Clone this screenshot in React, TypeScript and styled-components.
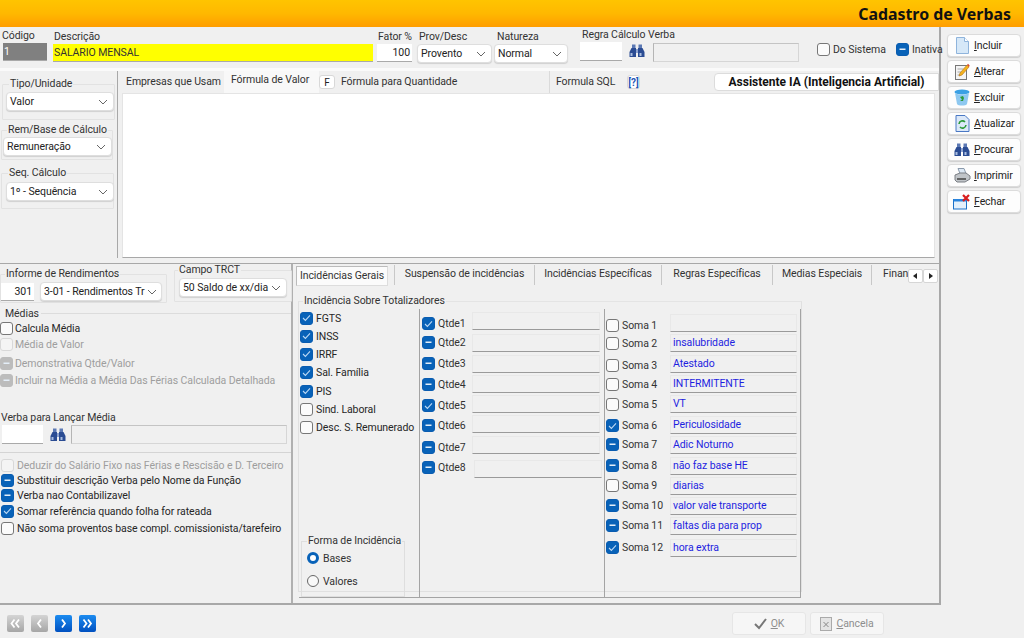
import React from 'react';
import styled, { createGlobalStyle } from 'styled-components';

const UI_FONT = '"Roboto", "Liberation Sans", sans-serif';
const FS = '10.5px';

const Global = createGlobalStyle`
  html, body { margin: 0; padding: 0; background: #f0f0f0; }
  * { box-sizing: border-box; }
  body { font-family: ${UI_FONT}; font-size: ${FS}; letter-spacing: -0.08px; color: #333; }
`;

const Page = styled.div`
  width: 1024px; height: 638px; display: flex; flex-direction: column; overflow: hidden; background: #f0f0f0;
`;
const Header = styled.header`
  height: 27px; flex: none; display: flex; align-items: center; justify-content: flex-end; padding: 0 13px 0 0;
  background: linear-gradient(180deg, #ffc400 0%, #ffb800 50%, #ff9d00 100%);
`;
const Title = styled.h1`
  margin: 0; font-family: "Noto Sans", sans-serif; font-weight: 700; font-size: 15.9px; letter-spacing: 0; color: #111;
`;
const Body = styled.div`
  flex: none; height: 578px; display: flex;
`;
const MainCol = styled.main`
  width: 941px; flex: none; display: flex; flex-direction: column; border-right: 2px solid #a8a8a8;
`;
const Side = styled.aside`
  flex: 1; display: flex; flex-direction: column; gap: 3px; padding: 7px 3px 0 6px;
`;
const SideButton = styled.div`
  height: 23px; display: flex; align-items: center; gap: 3px; padding-left: 5px; background: #fdfdfd;
  border: 1px solid #dcdcdc; border-radius: 4px; color: #222; font-size: ${FS}; box-shadow: 0 1px 1px #cfcfcf;
  u { text-underline-offset: 1px; }
`;
const IconSlot = styled.span`
  width: 18px; height: 18px; flex: none; display: flex; align-items: center; justify-content: center;
`;
const TopRow = styled.section`
  height: 41px; flex: none; display: flex; align-items: flex-start;
`;
const Field = styled.div<{ $w: number; $ml?: number; $pt?: number }>`
  width: ${p => p.$w}px; margin-left: ${p => p.$ml ?? 0}px; padding-top: ${p => p.$pt ?? 2}px; flex: none;
  display: flex; flex-direction: column;
`;
const Label = styled.span<{ $ml?: number; $mt?: number }>`
  height: 14px; line-height: 14px; margin-left: ${p => p.$ml ?? 0}px; margin-top: ${p => p.$mt ?? 0}px; flex: none;
  white-space: nowrap; color: #333; font-size: ${FS};
`;
const Input = styled.div<{ $bg?: string; $fg?: string; $align?: string; $h?: number; $w?: number }>`
  width: ${p => (p.$w ? `${p.$w}px` : 'auto')}; flex: none;
  height: ${p => p.$h ?? 18}px; line-height: 18px; padding: 0 2px 0 1px; background: ${p => p.$bg ?? '#fff'}; color: ${p => p.$fg ?? '#222'};
  text-align: ${p => p.$align ?? 'left'}; border-bottom: 1px solid #a9a9a9; white-space: nowrap; overflow: hidden; font-size: ${FS};
`;
const ReadOnly = styled.div<{ $w: number; $h?: number; $ml?: number }>`
  width: ${p => p.$w}px; height: ${p => p.$h ?? 19}px; margin-left: ${p => p.$ml ?? 0}px; flex: none; background: #f0f0f0;
  border: 1px solid #d6d6d6; border-left-color: #b5b5b5; border-top-color: #c4c4c4;
`;
const SelectBox = styled.div<{ $w?: number; $ml?: number }>`
  width: ${p => (p.$w ? `${p.$w}px` : 'auto')}; margin-left: ${p => p.$ml ?? 0}px; height: 19px; flex: none; display: flex; align-items: center;
  justify-content: space-between; padding: 0 5px 0 3px; background: #fff; border: 1px solid #dedede; border-radius: 4px;
  color: #222; white-space: nowrap; overflow: hidden; font-size: ${FS}; box-shadow: 0 1px 1px #d0d0d0;
  svg { flex: none; margin-left: 2px; }
`;
const InlineRow = styled.div<{ $ml?: number; $pt?: number; $gap?: number; $w?: number }>`
  display: flex; align-items: center; margin-left: ${p => p.$ml ?? 0}px; padding-top: ${p => p.$pt ?? 0}px; gap: ${p => p.$gap ?? 0}px; flex: none;
  width: ${p => (p.$w ? `${p.$w}px` : 'auto')}; white-space: nowrap;
`;
const Middle = styled.section`
  height: 195px; flex: none; display: flex; border-top: 3px solid #fafafa;
`;
const LeftPanel = styled.div`
  width: 118px; flex: none; height: 187px; border-right: 1px solid #a8a8a8; display: flex; flex-direction: column;
`;
const Group = styled.fieldset<{ $w: number; $h: number; $ml?: number; $mt?: number; $lx?: number; $pt?: number }>`
  margin: ${p => p.$mt ?? 0}px 0 0 ${p => p.$ml ?? 0}px; padding: ${p => p.$pt ?? 0}px 0 0 0; width: ${p => p.$w}px; height: ${p => p.$h}px; flex: none;
  border: 1px solid #e2e2e2; border-radius: 1px; min-width: 0;
  legend { margin-left: ${p => p.$lx ?? 5}px; padding: 0 1px; font-size: ${FS}; line-height: 12px; color: #333; white-space: nowrap; }
`;
const EditorCol = styled.div`
  flex: 1; display: flex; flex-direction: column; min-width: 0;
`;
const TopTabs = styled.nav`
  height: 22px; flex: none; display: flex; align-items: center;
`;
const TabText = styled.span<{ $w?: number; $ml?: number; $active?: boolean; $sep?: boolean }>`
  width: ${p => (p.$w ? `${p.$w}px` : 'auto')}; margin-left: ${p => p.$ml ?? 0}px; flex: none; white-space: nowrap; color: #333;
  height: 22px; line-height: 21px; font-size: ${FS};
  ${p => p.$active ? 'background:#f8f8f8; line-height:17px; padding-left:7px;' : ''}
  ${p => p.$sep ? 'border-right:1px solid #dadada;' : ''}
`;
const MiniButton = styled.span<{ $blue?: boolean; $ml?: number; $w?: number }>`
  width: ${p => p.$w ?? 15}px; height: 14px; flex: none; margin-left: ${p => p.$ml ?? 0}px; display: flex; align-items: center; justify-content: center;
  background: #fff; border: 1px solid #d8d8d8; border-radius: 3px; font-size: 10px; font-weight: ${p => p.$blue ? 700 : 400};
  color: ${p => p.$blue ? '#2456b8' : '#222'};
`;
const Assist = styled.div`
  width: 225px; height: 18px; flex: none; margin-left: 74px; display: flex; align-items: center; justify-content: center;
  background: #fff; border: 1px solid #dcdcdc; border-radius: 4px 0 0 4px; font-weight: 700; font-size: 12px; letter-spacing: 0; color: #111;
`;
const Editor = styled.div`
  width: 813px; height: 165px; flex: none; margin-left: 4px; background: #fff; border: 1px solid #e4e4e4; border-bottom: 1px solid #a8a8a8;
`;
const Lower = styled.section`
  flex: 1; display: flex; min-height: 0; border-top: 1px solid #a8a8a8; border-bottom: 2px solid #a8a8a8;
`;
const LowerLeft = styled.div`
  width: 293px; flex: none; display: flex; flex-direction: column; border-right: 2px solid #b0b0b0;
`;
const InfoRow = styled.div`
  height: 43px; flex: none; display: flex; align-items: flex-start;
`;
const SectionTitle = styled.div`
  height: 13px; flex: none; padding-left: 5px; line-height: 13px; font-size: ${FS}; color: #333;
  display: flex; align-items: center; gap: 1px;
  &::after { content: ""; flex: 1; height: 1px; background: #dcdcdc; margin-left: 1px; }
`;
const CheckRow = styled.div<{ $h: number; $ml?: number; $mt?: number; $tx?: number; $dim?: boolean }>`
  height: ${p => p.$h}px; flex: none; display: flex; align-items: center; margin: ${p => p.$mt ?? 0}px 0 0 ${p => p.$ml ?? 0}px; gap: ${p => p.$tx ?? 3}px;
  color: ${p => p.$dim ? '#9e9e9e' : '#262626'}; white-space: nowrap; font-size: ${FS}; line-height: 13px;
`;
const Box = styled.span<{ $state: string; $dim?: boolean }>`
  width: 13px; height: 13px; flex: none; border-radius: 3px; display: flex; align-items: center; justify-content: center;
  border: 1px solid ${p => p.$state === 'off' ? (p.$dim ? '#d8d8d8' : '#777') : p.$dim ? '#bcbcbc' : '#0a5cb0'};
  background: ${p => p.$state === 'off' ? (p.$dim ? '#f4f4f4' : '#fbfbfb') : p.$dim ? '#bcbcbc' : '#0862b8'};
`;
const Divider = styled.div<{ $mt?: number }>`
  height: 1px; flex: none; margin-top: ${p => p.$mt ?? 0}px; background: #d4d4d4;
`;
const LowerRight = styled.div`
  flex: 1; min-width: 0; display: flex; flex-direction: column;
`;
const TabBar = styled.nav`
  height: 22px; flex: none; display: flex; align-items: center; padding-left: 3px; overflow: hidden;
`;
const LTab = styled.span<{ $w: number; $active?: boolean }>`
  width: ${p => p.$w}px; flex: none; height: 20px; line-height: 18px; font-size: ${FS}; white-space: nowrap; overflow: hidden; color: #333; text-align: center;
  ${p => p.$active
    ? 'background:#fbfbfb; border:1px solid #bbb; border-right-color:#ddd; border-bottom-color:#ddd; margin:1px 6px 0 0;'
    : 'border-left:1px solid #c8c8c8; margin-top:-1px;'}
`;
const LTabLast = styled.span`
  width: 37px; padding-left: 11px; border-left: 1px solid #c8c8c8; flex: none; overflow: hidden; white-space: nowrap; height: 20px; line-height: 18px; font-size: ${FS}; margin-top: -1px;
`;
const Scroller = styled.div`
  display: flex; flex: none; width: 30px; height: 14px; margin-top: 1px;
`;
const ScrollBtn = styled.span`
  flex: 1; height: 14px; display: flex; align-items: center; justify-content: center; background: #fff; border: 1px solid #d6d6d6; border-radius: 2px;
`;
const Totals = styled.fieldset`
  margin: 9px 0 0 5px; padding: 0; width: 504px; height: 297px; flex: none; min-width: 0;
  border: 1px solid #e0e0e0; border-top: 1px solid #e4e4e4; display: flex;
  legend { margin-left: 4px; padding: 0 1px; font-size: ${FS}; line-height: 12px; color: #333; }
`;
const TotalsGrid = styled.div`
  width: 502px; height: 289px; margin-top: 2px; display: flex; border-bottom: 1px solid #a4a4a4; border-right: 1px solid #a4a4a4;
`;
const Col = styled.div<{ $w: number; $pt: number; $pl: number }>`
  width: ${p => p.$w}px; flex: none; display: flex; flex-direction: column; padding: ${p => p.$pt}px 0 0 ${p => p.$pl}px;
  border-right: 1px solid #a4a4a4;
  &:last-child { border-right: 0; }
`;
const QRow = styled.div<{ $h: number }>`
  height: ${p => p.$h}px; flex: none; display: flex; align-items: flex-end;
`;
const QLabel = styled.div<{ $w: number; $mb: number }>`
  width: ${p => p.$w}px; flex: none; display: flex; align-items: center; gap: 3px; white-space: nowrap; color: #333; font-size: ${FS};
  margin-bottom: ${p => p.$mb}px;
`;
const QInput = styled.div<{ $w: number; $ml?: number }>`
  width: ${p => p.$w}px; height: 18px; flex: none; margin-left: ${p => p.$ml ?? 0}px; padding-left: 2px; line-height: 16px; border: 1px solid #e8e8e8; border-bottom: 1px solid #9a9a9a;
  color: #1f1fe0; font-size: ${FS}; white-space: nowrap; overflow: hidden; background: #f0f0f0;
`;
const FormaGroup = styled.fieldset`
  margin: auto 0 0 1px; padding: 0; width: 104px; height: 62px; flex: none; border: 1px solid #dedede; min-width: 0;
  legend { margin-left: 5px; padding: 0 1px; font-size: ${FS}; line-height: 12px; color: #333; white-space: nowrap; }
`;
const RadioRow = styled.div<{ $h: number }>`
  height: ${p => p.$h}px; display: flex; align-items: center; gap: 4px; padding-left: 5px; font-size: ${FS}; color: #333;
`;
const Radio = styled.span<{ $on?: boolean }>`
  width: 12px; height: 12px; flex: none; border-radius: 50%; background: ${p => p.$on ? '#fff' : '#f8f8f8'};
  border: ${p => p.$on ? '3.5px solid #0862b8' : '1px solid #666'};
`;
const Footer = styled.footer`
  flex: 1; display: flex; align-items: flex-start; padding: 0 140px 0 7px;
`;
const NavGroup = styled.div`
  display: flex; gap: 7px; margin-top: 10px;
`;
const NavBtn = styled.span<{ $on?: boolean }>`
  width: 17px; height: 17px; flex: none; display: flex; align-items: center; justify-content: center; border-radius: 2px;
  background: ${p => p.$on ? 'linear-gradient(180deg,#1c8cf0,#0050c0)' : 'linear-gradient(180deg,#d4d4d4,#a6a6a6)'};
`;
const FootActions = styled.div`
  margin-left: auto; display: flex; gap: 4px; margin-top: 7px;
`;
const FootBtn = styled.div`
  width: 74px; height: 23px; display: flex; align-items: center; justify-content: center; gap: 4px;
  background: #f6f6f6; border: 1px solid #e6e6e6; border-radius: 3px; color: #8e8e8e; font-size: ${FS};
`;
const BinoSvg = styled.svg<{ $ml?: number }>`
  flex: none; margin-left: ${p => p.$ml ?? 0}px;
`;

const Chevron = () => (
  <svg width="10" height="6" viewBox="0 0 10 6"><path d="M1 1l4 4 4-4" fill="none" stroke="#666" strokeWidth="1" /></svg>
);

const Select = ({ text, w, ml }: { text: string; w?: number; ml?: number }) => (
  <SelectBox $w={w} $ml={ml}><span>{text}</span><Chevron /></SelectBox>
);

const Check = ({ state, dim }: { state: 'on' | 'off' | 'mixed'; dim?: boolean }) => (
  <Box $state={state} $dim={dim}>
    {state === 'on' && <svg width="9" height="8" viewBox="0 0 9 8"><path d="M1 4l2.4 2.4L8 1.4" fill="none" stroke="#bcd8f4" strokeWidth="1.1" /></svg>}
    {state === 'mixed' && <svg width="7" height="3" viewBox="0 0 7 3"><rect x="0.5" y="0.5" width="6" height="1.5" fill="#e4eef8" /></svg>}
  </Box>
);

const Binoculars = ({ ml = 0 }: { ml?: number }) => (
  <BinoSvg $ml={ml} width="16" height="14" viewBox="0 0 16 14">
    <rect x="3" y="0.5" width="3.5" height="3.5" fill="#5c79b4" />
    <rect x="9.5" y="0.5" width="3.5" height="3.5" fill="#5c79b4" />
    <path d="M2.5 4h4.5v9H0.5V8z" fill="#2b4c93" />
    <path d="M9 4h4.5l2 4v5H9z" fill="#2b4c93" />
    <rect x="7" y="5" width="2" height="4" fill="#8ea3cf" />
    <rect x="1.5" y="9" width="2" height="3" fill="#a8bce0" />
    <rect x="10.5" y="9" width="2" height="3" fill="#a8bce0" />
  </BinoSvg>
);

const IconDoc = () => (
  <svg width="14" height="17" viewBox="0 0 14 17"><path d="M1.5.5h8l4 4v12h-12z" fill="#d6e8f8" stroke="#8fb4dc" /><path d="M9.5.5v4h4" fill="#fff" stroke="#8fb4dc" /></svg>
);
const IconEdit = () => (
  <svg width="15" height="17" viewBox="0 0 15 17">
    <rect x="0.5" y="2.5" width="11" height="14" fill="#f4f4f4" stroke="#777" />
    <path d="M2.5 6h6M2.5 9h4M2.5 12h3" stroke="#aaa" />
    <path d="M4 13l1-3 7-8 2 2-7 8z" fill="#f4b21c" stroke="#b4741a" strokeWidth=".6" />
    <path d="M12 2l1-1.3 1.7 1.7-.7 1.6z" fill="#d84a2a" />
  </svg>
);
const IconBin = () => (
  <svg width="16" height="17" viewBox="0 0 16 17">
    <ellipse cx="8" cy="3" rx="7.5" ry="2.5" fill="#3aa0e4" />
    <path d="M1 4l2 11c1 2 9 2 10 0l2-11c-3 2-11 2-14 0z" fill="#8ec8f0" />
    <path d="M6 8l3-1 1 2-1 3-3 0 2-1.5z" fill="#2c9a3a" />
  </svg>
);
const IconRefresh = () => (
  <svg width="15" height="17" viewBox="0 0 15 17">
    <path d="M1 .5h9l4 4v12H1z" fill="#dbe8f8" stroke="#4a78c4" />
    <path d="M4 9a3.5 3.5 0 0 1 6-2M11 10a3.5 3.5 0 0 1-6 2" fill="none" stroke="#2c9a3a" strokeWidth="1.6" />
  </svg>
);
const IconPrinter = () => (
  <svg width="17" height="15" viewBox="0 0 17 15">
    <path d="M4 .5h6l2 5H6z" fill="#dce8f4" stroke="#8a9aac" />
    <path d="M1 7l5-2h6l4 3v3l-5 3H3l-2-2z" fill="#c0c4c8" stroke="#7a7e84" />
    <path d="M3 11h9" stroke="#444" strokeWidth="1.5" />
  </svg>
);
const IconClose = () => (
  <svg width="18" height="16" viewBox="0 0 18 16">
    <rect x="0.5" y="5.5" width="13" height="9.5" fill="#e4f0fb" stroke="#1a70c8" />
    <rect x="0.5" y="5" width="13" height="2.5" fill="#2a84dc" />
    <path d="M10 1l6 6M16 1l-6 6" stroke="#d81c1c" strokeWidth="2.2" />
  </svg>
);

const NavIcon = ({ kind }: { kind: string }) => {
  const one = (x: number, dir: number) =>
    dir > 0 ? `M${x} 4.5l3 4-3 4` : `M${x + 3} 4.5l-3 4 3 4`;
  const d =
    kind === '<<' ? one(3.5, -1) + one(8, -1) : kind === '<' ? one(6, -1) : kind === '>' ? one(6, 1) : one(3.5, 1) + one(8, 1);
  return (
    <svg width="16" height="17" viewBox="0 0 16 17"><path d={d} fill="none" stroke="#fff" strokeWidth="1.8" /></svg>
  );
};

const sideButtons: [React.ReactNode, string, string][] = [
  [<IconDoc />, 'I', 'ncluir'],
  [<IconEdit />, 'A', 'lterar'],
  [<IconBin />, 'E', 'xcluir'],
  [<IconRefresh />, 'A', 'tualizar'],
  [<Binoculars />, 'P', 'rocurar'],
  [<IconPrinter />, 'I', 'mprimir'],
  [<IconClose />, 'F', 'echar'],
];

type S = 'on' | 'off' | 'mixed';
const col1: [string, S, number][] = [
  ['FGTS', 'on', 18], ['INSS', 'on', 18], ['IRRF', 'on', 18], ['Sal. Família', 'on', 19],
  ['PIS', 'on', 18], ['Sind. Laboral', 'off', 18], ['Desc. S. Remunerado', 'off', 18],
];
const col2: [string, S, number, number, number?][] = [
  ['Qtde1', 'on', 21, 0], ['Qtde2', 'mixed', 22, 3], ['Qtde3', 'mixed', 21, 3], ['Qtde4', 'mixed', 20, 2],
  ['Qtde5', 'on', 20, 1], ['Qtde6', 'mixed', 20, 1], ['Qtde7', 'mixed', 21, 0], ['Qtde8', 'mixed', 24, 4, 2],
];
const col3: [string, S, string, number, number][] = [
  ['Soma 1', 'off', '', 23, 0], ['Soma 2', 'off', 'insalubridade', 20, 2], ['Soma 3', 'off', 'Atestado', 21, 1],
  ['Soma 4', 'off', 'INTERMITENTE', 20, 2], ['Soma 5', 'off', 'VT', 20, 2], ['Soma 6', 'on', 'Periculosidade', 21, 2],
  ['Soma 7', 'mixed', 'Adic Noturno', 20, 3], ['Soma 8', 'mixed', 'não faz base HE', 21, 3], ['Soma 9', 'off', 'diarias', 20, 3],
  ['Soma 10', 'mixed', 'valor vale transporte', 20, 3], ['Soma 11', 'mixed', 'faltas dia para prop', 20, 3], ['Soma 12', 'on', 'hora extra', 22, 3],
];

export default function App() {
  return (
    <Page>
      <Global />
      <Header><Title>Cadastro de Verbas</Title></Header>
      <Body>
        <MainCol>
          <TopRow>
            <Field $w={44} $ml={3} $pt={2}>
              <Label $ml={-1}>Código</Label>
              <Input $bg="#808080" $fg="#fff">1</Input>
            </Field>
            <Field $w={320} $ml={6} $pt={3}>
              <Label $ml={1}>Descrição</Label>
              <Input $bg="#ffff00" $fg="#333">SALARIO MENSAL</Input>
            </Field>
            <Field $w={35} $ml={4} $pt={3}>
              <Label $ml={1}>Fator %</Label>
              <Input $align="right">100</Input>
            </Field>
            <Field $w={75} $ml={5} $pt={3}>
              <Label $ml={2}>Prov/Desc</Label>
              <Select text="Provento" />
            </Field>
            <Field $w={74} $ml={2} $pt={3}>
              <Label $ml={3}>Natureza</Label>
              <Select text="Normal" />
            </Field>
            <Field $w={42} $ml={12} $pt={1}>
              <Label $ml={2}>Regra Cálculo Verba</Label>
              <Input $h={19}>&nbsp;</Input>
            </Field>
            <InlineRow $ml={7} $pt={17}><Binoculars /></InlineRow>
            <InlineRow $ml={8} $pt={16}><ReadOnly $w={146} /></InlineRow>
            <InlineRow $ml={18} $pt={16} $gap={3} $w={79}><Check state="off" /><span>Do Sistema</span></InlineRow>
            <InlineRow $pt={16} $gap={3}><Check state="mixed" /><span>Inativa</span></InlineRow>
          </TopRow>
          <Middle>
            <LeftPanel>
              <Group $w={113} $h={42} $ml={2} $mt={7} $lx={6} $pt={2}>
                <legend>Tipo/Unidade</legend>
                <Select text="Valor" w={108} ml={3} />
              </Group>
              <Group $w={112} $h={36} $ml={1} $mt={4} $lx={5} $pt={1}>
                <legend>Rem/Base de Cálculo</legend>
                <Select text="Remuneração" w={109} ml={1} />
              </Group>
              <Group $w={113} $h={42} $ml={1} $mt={7} $lx={6} $pt={3}>
                <legend>Seq. Cálculo</legend>
                <Select text="1º - Sequência" w={108} ml={4} />
              </Group>
            </LeftPanel>
            <EditorCol>
              <TopTabs>
                <TabText $ml={8} $w={98}>Empresas que Usam</TabText>
                <TabText $w={95} $active>Fórmula de Valor</TabText>
                <MiniButton $w={16}>F</MiniButton>
                <TabText $ml={6} $w={209} $sep>Fórmula para Quantidade</TabText>
                <TabText $ml={6} $w={71}>Formula SQL</TabText>
                <MiniButton $blue $w={13}>[?]</MiniButton>
                <Assist>Assistente IA (Inteligencia Artificial)</Assist>
              </TopTabs>
              <Editor />
            </EditorCol>
          </Middle>
          <Lower>
            <LowerLeft>
              <InfoRow>
                <Group $w={167} $h={35} $mt={4} $lx={4} $pt={2}>
                  <legend>Informe de Rendimentos</legend>
                  <InlineRow>
                    <Input $align="right" $w={33}>301</Input>
                    <Select text="3-01 - Rendimentos Tr" w={122} ml={6} />
                  </InlineRow>
                </Group>
                <Group $w={118} $h={38} $ml={7} $lx={3} $pt={2}>
                  <legend>Campo TRCT</legend>
                  <Select text="50 Saldo de xx/dia" w={108} ml={4} />
                </Group>
              </InfoRow>
              <SectionTitle>Médias</SectionTitle>
              <CheckRow $h={16} $tx={2}><Check state="off" /><span>Calcula Média</span></CheckRow>
              <CheckRow $h={16} $tx={2} $dim><Check state="off" dim /><span>Média de Valor</span></CheckRow>
              <CheckRow $h={22} $tx={2} $dim><Check state="mixed" dim /><span>Demonstrativa Qtde/Valor</span></CheckRow>
              <CheckRow $h={13} $tx={2} $dim><Check state="mixed" dim /><span>Incluir na Média a Média Das Férias Calculada Detalhada</span></CheckRow>
              <Label $ml={1} $mt={24}>Verba para Lançar Média</Label>
              <InlineRow $ml={2}>
                <Input $h={19} $w={41}>&nbsp;</Input>
                <Binoculars ml={7} />
                <ReadOnly $w={216} $ml={5} />
              </InlineRow>
              <Divider $mt={8} />
              <CheckRow $h={16} $ml={1} $mt={4} $dim><Check state="off" dim /><span>Deduzir do Salário Fixo nas  Férias e Rescisão e D. Terceiro</span></CheckRow>
              <CheckRow $h={15} $ml={1}><Check state="mixed" /><span>Substituir descrição Verba pelo Nome da Função</span></CheckRow>
              <CheckRow $h={15} $ml={1}><Check state="mixed" /><span>Verba nao Contabilizavel</span></CheckRow>
              <CheckRow $h={16} $ml={1}><Check state="on" /><span>Somar referência quando folha for rateada</span></CheckRow>
              <CheckRow $h={18} $ml={1}><Check state="off" /><span>Não soma proventos base compl. comissionista/tarefeiro</span></CheckRow>
            </LowerLeft>
            <LowerRight>
              <TabBar>
                <LTab $w={92} $active>Incidências Gerais</LTab>
                <LTab $w={140}>Suspensão de incidências</LTab>
                <LTab $w={127}>Incidências Específicas</LTab>
                <LTab $w={111}>Regras Específicas</LTab>
                <LTab $w={99}>Medias Especiais</LTab>
                <LTabLast>Finan</LTabLast>
                <Scroller>
                  <ScrollBtn><svg width="5" height="6" viewBox="0 0 5 6"><path d="M4 0v6L0 3z" fill="#222" /></svg></ScrollBtn>
                  <ScrollBtn><svg width="5" height="6" viewBox="0 0 5 6"><path d="M1 0v6l4-3z" fill="#222" /></svg></ScrollBtn>
                </Scroller>
              </TabBar>
              <Totals>
                <legend>Incidência Sobre Totalizadores</legend>
                <TotalsGrid>
                  <Col $w={121} $pt={0} $pl={1}>
                    {col1.map(([t, s, h]) => (
                      <CheckRow key={t} $h={h}><Check state={s} /><span>{t}</span></CheckRow>
                    ))}
                    <FormaGroup>
                      <legend>Forma de Incidência</legend>
                      <RadioRow $h={22}><Radio $on /><span>Bases</span></RadioRow>
                      <RadioRow $h={24}><Radio /><span>Valores</span></RadioRow>
                    </FormaGroup>
                  </Col>
                  <Col $w={185} $pt={0} $pl={2}>
                    {col2.map(([t, s, h, mb, ml]) => (
                      <QRow key={t} $h={h}>
                        <QLabel $w={50} $mb={mb}><Check state={s} /><span>{t}</span></QLabel>
                        <QInput $w={128} $ml={ml} />
                      </QRow>
                    ))}
                  </Col>
                  <Col $w={195} $pt={0} $pl={1}>
                    {col3.map(([t, s, v, h, mb]) => (
                      <QRow key={t} $h={h}>
                        <QLabel $w={64} $mb={mb}><Check state={s} /><span>{t}</span></QLabel>
                        <QInput $w={127}>{v}</QInput>
                      </QRow>
                    ))}
                  </Col>
                </TotalsGrid>
              </Totals>
            </LowerRight>
          </Lower>
        </MainCol>
        <Side>
          {sideButtons.map(([icon, first, rest], i) => (
            <SideButton key={i}><IconSlot>{icon}</IconSlot><span><u>{first}</u>{rest}</span></SideButton>
          ))}
        </Side>
      </Body>
      <Footer>
        <NavGroup>
          <NavBtn><NavIcon kind="<<" /></NavBtn>
          <NavBtn><NavIcon kind="<" /></NavBtn>
          <NavBtn $on><NavIcon kind=">" /></NavBtn>
          <NavBtn $on><NavIcon kind=">>" /></NavBtn>
        </NavGroup>
        <FootActions>
          <FootBtn>
            <svg width="13" height="12" viewBox="0 0 13 12"><path d="M1 6l4 4 7-9" fill="none" stroke="#777" strokeWidth="2" /></svg>
            <span><u>O</u>K</span>
          </FootBtn>
          <FootBtn>
            <svg width="12" height="14" viewBox="0 0 12 14"><rect x="0.5" y="0.5" width="11" height="13" fill="#e4e4e4" stroke="#aaa" /><path d="M3.5 5l5 5M8.5 5l-5 5" stroke="#888" /></svg>
            <span><u>C</u>ancela</span>
          </FootBtn>
        </FootActions>
      </Footer>
    </Page>
  );
}
